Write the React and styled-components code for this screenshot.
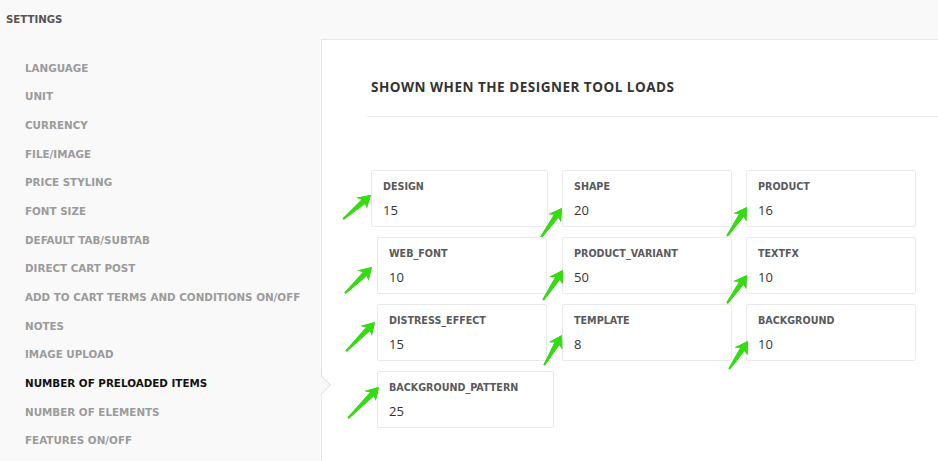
import styled, { createGlobalStyle } from "styled-components";

const GlobalStyle = createGlobalStyle`
  html, body {
    margin: 0;
    padding: 0;
    background: #f9f9f9;
  }
  * {
    box-sizing: border-box;
  }
`;

const Page = styled.div`
  width: 938px;
  height: 461px;
  overflow: hidden;
  background: #f9f9f9;
  display: flex;
  flex-direction: column;
`;

const Header = styled.div`
  height: 39px;
  padding: 13px 0 0 6px;
  font-family: "DejaVu Sans", sans-serif;
  font-weight: 700;
  font-size: 10.2px;
  line-height: 14px;
  color: #555;
`;

const Body = styled.div`
  flex: 1;
  display: flex;
`;

const Sidebar = styled.ul`
  width: 321px;
  margin: 0;
  padding: 14.5px 0 0 0;
  list-style: none;
  position: relative;
  z-index: 1;
`;

const NavItem = styled.li`
  position: relative;
  height: 28.7px;
  line-height: 28.7px;
  padding-left: 25px;
  font-family: "DejaVu Sans", sans-serif;
  font-weight: 700;
  font-size: 10.35px;
  color: ${(p) => (p.$active ? "#111" : "#9b9b9b")};

  ${(p) =>
    p.$active &&
    `
    &::after {
      content: "";
      position: absolute;
      right: -6.5px;
      top: 50%;
      width: 13px;
      height: 13px;
      margin-top: -5px;
      background: #f9f9f9;
      border-top: 1px solid #e3e3e3;
      border-right: 1px solid #e3e3e3;
      transform: rotate(45deg);
    }
  `}
`;

const Panel = styled.section`
  flex: 1;
  background: #fff;
  border-top: 1px solid #e6e6e6;
  border-left: 1px solid #e6e6e6;
  padding: 0 0 0 45px;
`;

const Title = styled.h2`
  margin: 0;
  padding: 38px 0 0 4px;
  height: 77px;
  font-family: "Open Sans", sans-serif;
  font-weight: 700;
  font-size: 13.5px;
  letter-spacing: 0.5px;
  line-height: 18px;
  color: #333;
  border-bottom: 1px solid #e8e8e8;
`;

const Grid = styled.div`
  display: grid;
  grid-template-columns: 177px 170px 170px;
  grid-auto-rows: 57px;
  column-gap: 14px;
  row-gap: 10px;
  margin: 53px 0 0 4px;
`;

const Card = styled.div`
  position: relative;
  width: ${(p) => (p.$wide ? "177px" : "170px")};
  margin-left: ${(p) => (p.$indent ? "6px" : "0")};
  height: 57px;
  border: 1px solid #e9e9e9;
  border-radius: 2px;
  background: #fff;
  padding: 10px 11px 0;
`;

const Label = styled.div`
  font-family: "DejaVu Sans", sans-serif;
  font-weight: 700;
  font-size: 9.6px;
  line-height: 11px;
  color: #5a5a5a;
`;

const Value = styled.div`
  margin-top: 10px;
  font-family: "Open Sans", sans-serif;
  font-size: 13px;
  line-height: 16px;
  color: #333;
`;

const Pointer = styled.svg`
  position: absolute;
  left: ${(p) => p.$x}px;
  top: ${(p) => p.$y}px;
  width: 1px;
  height: 1px;
  overflow: visible;
  filter: drop-shadow(0 0 0.6px rgba(30, 90, 0, 0.6));
`;

const navItems = [
  "LANGUAGE",
  "UNIT",
  "CURRENCY",
  "FILE/IMAGE",
  "PRICE STYLING",
  "FONT SIZE",
  "DEFAULT TAB/SUBTAB",
  "DIRECT CART POST",
  "ADD TO CART TERMS AND CONDITIONS ON/OFF",
  "NOTES",
  "IMAGE UPLOAD",
  "NUMBER OF PRELOADED ITEMS",
  "NUMBER OF ELEMENTS",
  "FEATURES ON/OFF",
];

// tip offset from card corner, then tail vector (dx left, dy down)
const items = [
  { label: "DESIGN", value: 15, wide: true, arrow: [0, 25, 28, 24] },
  { label: "SHAPE", value: 20, arrow: [0, 38, 21, 29] },
  { label: "PRODUCT", value: 16, arrow: [1, 37, 20, 29] },
  { label: "WEB_FONT", value: 10, indent: true, arrow: [-5, 30, 27, 26] },
  { label: "PRODUCT_VARIANT", value: 50, arrow: [1, 33, 20, 30] },
  { label: "TEXTFX", value: 10, arrow: [1, 38, 20, 28] },
  { label: "DISTRESS_EFFECT", value: 15, indent: true, arrow: [-2, 18, 29, 29] },
  { label: "TEMPLATE", value: 8, arrow: [0, 31, 18, 30] },
  { label: "BACKGROUND", value: 10, arrow: [2, 37, 19, 28] },
  {
    label: "BACKGROUND_PATTERN",
    value: 25,
    indent: true,
    wide: true,
    arrow: [2, 16, 31, 31],
  },
];

const Arrow = ({ x, y, dx, dy }) => {
  const len = Math.hypot(dx, dy);
  const angle = (Math.atan2(-dy, dx) * 180) / Math.PI;
  const pts = [
    [0, 0],
    [-13, -7.5],
    [-10, -2.6],
    [-len, -0.7],
    [-len, 1.1],
    [-10, 2.8],
    [-12, 7.5],
  ]
    .map((p) => p.join(","))
    .join(" ");
  return (
    <Pointer $x={x} $y={y}>
      <polygon points={pts} fill="#2fe00a" transform={`rotate(${angle})`} />
    </Pointer>
  );
};

export default function App() {
  return (
    <Page>
      <GlobalStyle />
      <Header>SETTINGS</Header>
      <Body>
        <Sidebar>
          {navItems.map((n) => (
            <NavItem key={n} $active={n === "NUMBER OF PRELOADED ITEMS"}>
              {n}
            </NavItem>
          ))}
        </Sidebar>
        <Panel>
          <Title>SHOWN WHEN THE DESIGNER TOOL LOADS</Title>
          <Grid>
            {items.map((it) => (
              <Card key={it.label} $wide={it.wide} $indent={it.indent}>
                <Label>{it.label}</Label>
                <Value>{it.value}</Value>
                <Arrow
                  x={it.arrow[0] - 1}
                  y={it.arrow[1] - 1}
                  dx={it.arrow[2]}
                  dy={it.arrow[3]}
                />
              </Card>
            ))}
          </Grid>
        </Panel>
      </Body>
    </Page>
  );
}
